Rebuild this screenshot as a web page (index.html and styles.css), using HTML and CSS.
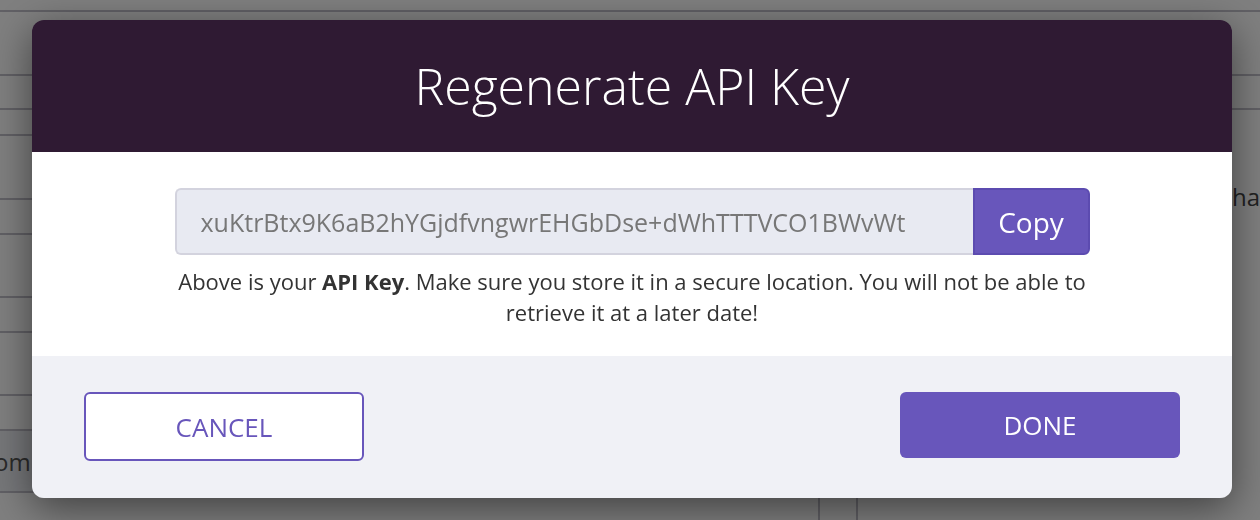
FILE: index.html
```html
<!DOCTYPE html>
<html lang="en">
<head>
  <meta charset="UTF-8">
  <meta name="viewport" content="width=device-width, initial-scale=1">
  <title>Regenerate API Key</title>
  <link rel="stylesheet" href="styles.css">
</head>
<body>
  <div class="page">
    <div class="topbar"></div>
    <div class="content">
      <div class="list">
        <div class="row" style="height: 64px"></div>
        <div class="row" style="height: 34px"></div>
        <div class="row" style="height: 26px"></div>
        <div class="row" style="height: 64px"></div>
        <div class="row" style="height: 35px"></div>
        <div class="row" style="height: 63px"></div>
        <div class="row" style="height: 35px"></div>
        <div class="row" style="height: 63px"></div>
        <div class="row" style="height: 35px"></div>
        <div class="row field" style="height: 62px"><span>om</span></div>
      </div>
      <div class="side">
        <div class="row" style="height: 64px"></div>
        <div class="row" style="height: 34px"></div>
        <div class="side-text">have</div>
      </div>
    </div>
    <div class="cols">
      <div class="col"></div>
    </div>
  </div>

  <div class="overlay">
    <div class="modal">
      <div class="modal-header">
        <h1>Regenerate API Key</h1>
      </div>
      <div class="modal-body">
        <div class="key-group">
          <input class="key-input" type="text" readonly value="xuKtrBtx9K6aB2hYGjdfvngwrEHGbDse+dWhTTTVCO1BWvWt">
          <button class="copy-btn">Copy</button>
        </div>
        <p class="key-note">Above is your <b>API Key</b>. Make sure you store it in a secure location. You will not be able to retrieve it at a later date!</p>
      </div>
      <div class="modal-footer">
        <button class="btn btn-outline">CANCEL</button>
        <button class="btn btn-primary">DONE</button>
      </div>
    </div>
  </div>
</body>
</html>
```

FILE: styles.css
```css
body {
  margin: 0;
  padding: 0;
  font-family: "Open Sans", "Liberation Sans", sans-serif;
  background-color: #fff;
  overflow: hidden;
}
.page {
  height: 520px;
}
.topbar {
  height: 10px;
  border-bottom: 2px solid #c2c0ca;
}
.content {
  display: flex;
  height: 484px;
}
.list {
  width: 818px;
  flex-shrink: 0;
}
.row {
  box-sizing: border-box;
  border-bottom: 2px solid #c2c0ca;
}
.field {
  display: flex;
  align-items: center;
  background-color: #eceef3;
  font-size: 24px;
  color: #555;
  text-indent: -6px;
}
.side {
  flex-grow: 1;
  padding-left: 38px;
}
.side-text {
  padding: 70px 0 0 376px;
  font-size: 24px;
  color: #444;
  white-space: nowrap;
}
.cols {
  display: flex;
  padding-left: 818px;
}
.col {
  width: 36px;
  height: 40px;
  border-left: 2px solid #c2c0ca;
  border-right: 2px solid #c2c0ca;
}
.overlay {
  position: fixed;
  inset: 0;
  background-color: rgba(0, 0, 0, 0.5);
}
.modal {
  position: absolute;
  left: 32px;
  top: 20px;
  width: 1200px;
  border-radius: 12px;
  overflow: hidden;
  box-shadow: 0 10px 40px rgba(0, 0, 0, 0.5);
}
.modal-header {
  height: 132px;
  background-color: #2f1a33;
  display: flex;
  align-items: center;
  justify-content: center;
}
.modal-header h1 {
  margin: 0;
  color: #fff;
  font-size: 50px;
  font-weight: 300;
}
.modal-body {
  background-color: #fff;
  padding: 36px 0 28px;
  display: flex;
  flex-direction: column;
  align-items: center;
}
.key-group {
  display: flex;
  width: 915px;
  height: 67px;
}
.key-input {
  flex-grow: 1;
  box-sizing: border-box;
  border: 2px solid #d3d3de;
  border-right: none;
  border-radius: 6px 0 0 6px;
  background-color: #e8eaf2;
  padding: 0 24px;
  font-family: inherit;
  font-size: 25px;
  color: #777;
  outline: none;
}
.copy-btn {
  width: 117px;
  border: 2px solid #5c4bb0;
  border-radius: 0 6px 6px 0;
  background-color: #6856bb;
  color: #fff;
  font-family: inherit;
  font-size: 28px;
  padding: 0;
}
.key-note {
  max-width: 915px;
  margin: 11px 0 0;
  text-align: center;
  font-size: 22px;
  line-height: 31px;
  color: #333;
}
.modal-footer {
  background-color: #f0f1f6;
  height: 142px;
  box-sizing: border-box;
  padding: 36px 52px 0;
  display: flex;
  justify-content: space-between;
  align-items: flex-start;
}
.btn {
  width: 280px;
  font-family: inherit;
  font-size: 26px;
  border-radius: 6px;
  cursor: pointer;
}
.btn-outline {
  height: 69px;
  border: 2px solid #6856bb;
  background-color: #fff;
  color: #6856bb;
}
.btn-primary {
  height: 66px;
  border: none;
  background-color: #6856bb;
  color: #fff;
}
```
